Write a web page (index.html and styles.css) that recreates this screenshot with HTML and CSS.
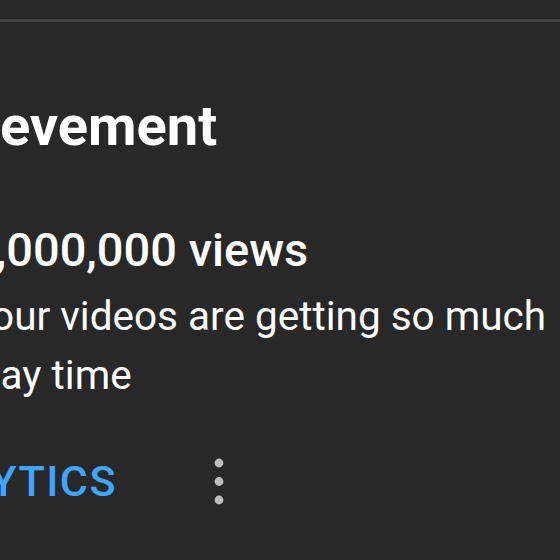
FILE: index.html
```html
<!DOCTYPE html>
<html lang="en">
<head>
<meta charset="utf-8">
<title>Achievement</title>
<link rel="stylesheet" href="styles.css">
</head>
<body>
  <div class="divider"></div>
  <section class="card">
    <h2 class="card-title">Achievement</h2>
    <div class="content">
      <div class="views">1,000,000 views</div>
      <p class="message">Your videos are getting so much<br>play time</p>
    </div>
    <div class="actions">
      <span class="btn">GO TO ANALYTICS</span>
      <svg class="more" width="20" height="60" viewBox="0 0 20 60" aria-hidden="true">
        <circle cx="10" cy="11" r="4.4"/>
        <circle cx="10" cy="29.5" r="4.4"/>
        <circle cx="10" cy="48" r="4.4"/>
      </svg>
    </div>
  </section>
</body>
</html>
```
FILE: styles.css
```css
html, body {
  margin: 0;
  padding: 0;
  background: #282828;
  overflow: hidden;
  width: 560px;
  height: 560px;
}

body {
  font-family: Roboto, "Liberation Sans", Arial, sans-serif;
  color: #ffffff;
  padding-top: 19px;
}

.divider {
  height: 3px;
  background: #444444;
  box-shadow: 0 -1px 0 #1f1f1f, 0 1px 0 #242424;
}

.card {
  margin-left: -28px;
  display: flex;
  flex-direction: column;
}

.card-title {
  margin: 71px 0 0 -85px;
  font-size: 56px;
  line-height: 1.2;
  font-weight: 700;
  white-space: nowrap;
}

.content {
  margin-top: 62px;
}

.views {
  margin-left: -3px;
  font-size: 47px;
  line-height: 1.2;
  font-weight: 500;
  white-space: nowrap;
}

.message {
  margin: 8px 0 0 -4px;
  font-size: 40.5px;
  line-height: 59px;
  font-weight: 400;
  white-space: nowrap;
}

.actions {
  margin-top: 47px;
  display: flex;
  align-items: center;
  gap: 92px;
}

.btn {
  margin-left: -237px;
  font-size: 43px;
  line-height: 1.2;
  font-weight: 500;
  letter-spacing: 1.5px;
  color: #3ea6ff;
  white-space: nowrap;
}

.more {
  fill: #bdbdbd;
  margin-top: 0;
}
```
